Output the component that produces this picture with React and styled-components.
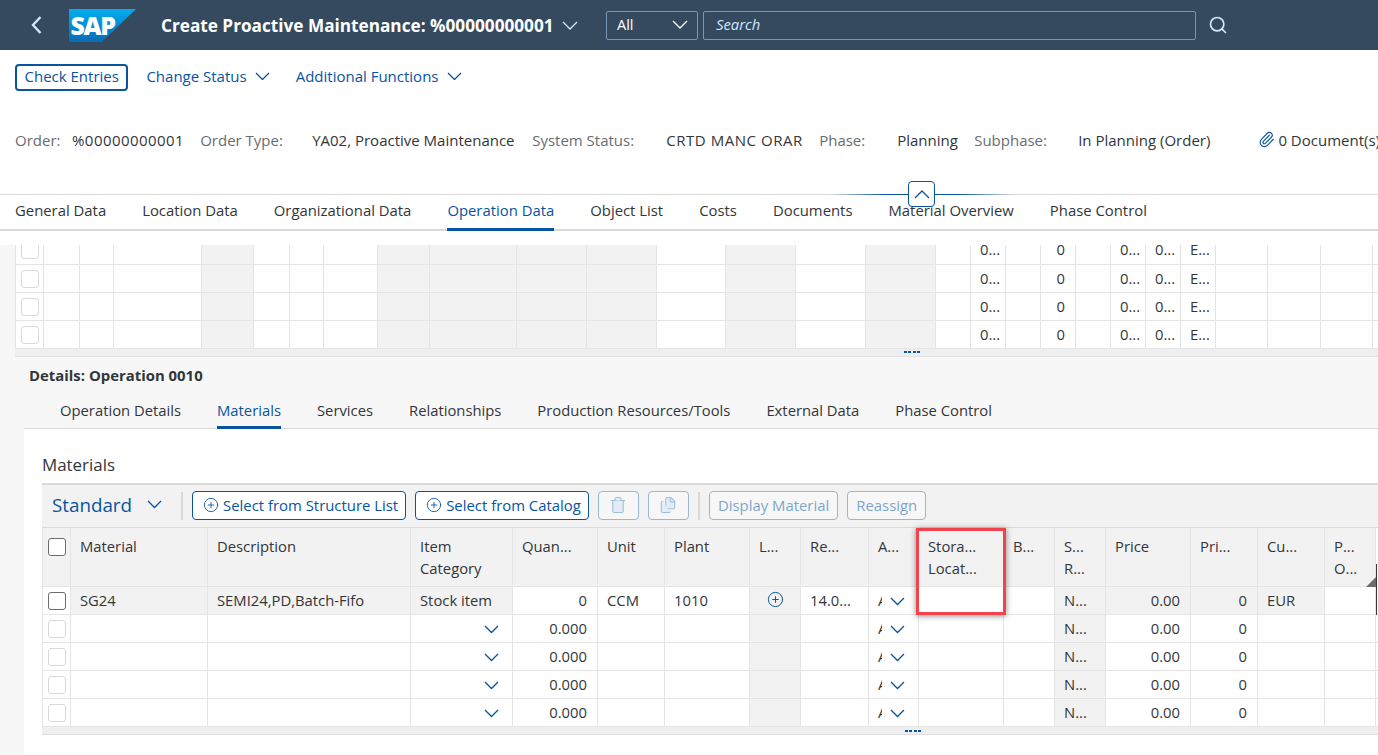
import React from "react";
import styled, { createGlobalStyle } from "styled-components";
import { Search, Paperclip, CirclePlus, Trash2, Files } from "lucide-react";

const Global = createGlobalStyle`
  html, body { margin: 0; padding: 0; width: 1378px; height: 755px; overflow: hidden; background: #fff; }
  body { font-family: "Open Sans", "Noto Sans", sans-serif; font-size: 15px; color: #32363a; }
  * { box-sizing: border-box; }
`;

const Page = styled.div`
  width: 1378px;
  height: 755px;
  overflow: hidden;
  display: flex;
  flex-direction: column;
`;

const ShellBar = styled.header`
  height: 50px;
  flex: none;
  background: #354a5f;
  display: flex;
  align-items: center;
  color: #fff;
`;
const BackBtn = styled.div`
  width: 69px;
  padding-left: 31px;
  display: flex;
  align-items: center;
  color: #d1e8ff;
`;
const LogoSlot = styled.div`
  width: 67px;
  flex: none;
  display: flex;
`;
const Title = styled.div`
  margin-left: 25px;
  font-size: 17.2px;
  font-weight: 700;
  white-space: nowrap;
  width: 393px;
`;
const TitleChevron = styled.div`
  display: flex;
  margin-left: 8px;
  width: 44px;
  color: #d1e8ff;
`;
const ScopeSelect = styled.div`
  width: 92px;
  height: 29px;
  border: 1px solid #7996b4;
  border-radius: 2px;
  display: flex;
  align-items: center;
  justify-content: space-between;
  padding: 0 9px 2px 10px;
  color: #fff;
  font-size: 14.5px;
`;
const SearchBox = styled.div`
  width: 493px;
  height: 29px;
  margin-left: 5px;
  border: 1px solid #7996b4;
  border-radius: 2px;
  padding: 0 0 2px 12px;
  display: flex;
  align-items: center;
  font-style: italic;
  font-size: 14.8px;
  color: #d1e8ff;
`;
const SearchIcon = styled.div`
  display: flex;
  margin-left: 12px;
  color: #d1e8ff;
`;

const ActionBar = styled.div`
  height: 54px;
  flex: none;
  padding: 14px 15px 0;
  display: flex;
  align-items: flex-start;
  gap: 18px;
`;
const OutlineAction = styled.div`
  height: 27px;
  padding: 0 7.5px 3px;
  border: 2px solid #0854a0;
  border-radius: 4px;
  color: #0854a0;
  display: flex;
  align-items: center;
  white-space: nowrap;
`;
const MenuAction = styled.div`
  height: 27px;
  display: flex;
  align-items: center;
  gap: 8px;
  padding: 0 8px 3px 0;
  color: #0854a0;
  white-space: nowrap;
`;

const InfoRow = styled.div`
  height: 90px;
  flex: none;
  padding: 0 0 19px 15px;
  display: flex;
  align-items: center;
  gap: 16px;
  white-space: nowrap;
  overflow: hidden;
`;
const InfoPair = styled.div`
  display: flex;
  flex: none;
`;
const InfoLabel = styled.span`
  color: #6a6d70;
  width: ${(p) => p.$w}px;
  flex: none;
`;
const InfoValue = styled.span`
  min-width: ${(p) => p.$w}px;
  letter-spacing: ${(p) => p.$ls || 0}px;
`;
const Docs = styled.div`
  margin-left: 32px;
  display: flex;
  align-items: center;
  gap: 3px;
  flex: none;
  svg { color: #0854a0; }
`;

const TabStrip = styled.nav`
  position: relative;
  height: 37px;
  flex: none;
  border-top: 1px solid #d9d9d9;
  border-bottom: 2px solid #d9d9d9;
  padding-left: 15px;
  display: flex;
  gap: 36px;
  font-size: 14.86px;
`;
const Tab = styled.div`
  height: 36px;
  margin-bottom: -2px;
  line-height: 30px;
  white-space: nowrap;
  color: ${(p) => (p.$active ? "#0854a0" : "#32363a")};
  border-bottom: 3px solid ${(p) => (p.$active ? "#0854a0" : "transparent")};
`;
const CollapseLine = styled.div`
  position: absolute;
  left: 830px;
  width: 184px;
  top: -1px;
  height: 1px;
  background: linear-gradient(90deg, transparent, #0854a0 30%, #0854a0 70%, transparent);
`;
const CollapseBtn = styled.div`
  position: absolute;
  left: 908px;
  top: -14px;
  width: 27px;
  height: 26px;
  background: #fff;
  border: 1px solid #0854a0;
  border-radius: 4px;
  color: #0854a0;
  display: flex;
  align-items: center;
  justify-content: center;
`;

const Content = styled.main`
  flex: 1;
  min-height: 0;
  display: flex;
  flex-direction: column;
`;
const TopSpacer = styled.div`
  height: 14px;
  flex: none;
  background: #fff;
`;
const Lower = styled.div`
  flex: 1;
  min-height: 0;
  background: #f7f7f7;
  padding-left: 15px;
  display: flex;
  flex-direction: column;
`;
const Grid = styled.div`
  display: grid;
  grid-template-columns: ${(p) => p.$cols};
  overflow: hidden;
  font-size: 14.8px;
`;
const Cell = styled.div`
  height: ${(p) => p.$h || 28}px;
  background: ${(p) => (p.$shade ? "#f2f2f2" : "#fff")};
  border-right: 1px solid #e5e5e5;
  border-bottom: 1px solid #e5e5e5;
  padding: 0 ${(p) => (p.$num ? 10 : 9)}px 2px;
  display: flex;
  align-items: center;
  justify-content: ${(p) => (p.$num ? "flex-end" : p.$center ? "center" : "flex-start")};
  white-space: nowrap;
  overflow: hidden;
  position: relative;
`;
const ClippedCell = styled(Cell)`
  height: 20px;
  align-items: flex-end;
  line-height: 30px;
  padding-bottom: 0;
`;
const Check = styled.div`
  width: 18px;
  height: 18px;
  border-radius: 3px;
  background: #fff;
  border: 1px solid ${(p) => (p.$strong ? "#6a6d70" : "#d9d9d9")};
  flex: none;
`;
const CheckCell = styled(Cell)`
  border-left: 1px solid #e5e5e5;
  padding: 0 0 0 5px;
`;
const ClippedCheckCell = styled(CheckCell)`
  height: 20px;
  align-items: flex-end;
  padding-bottom: 5px;
`;
const ScrollBar = styled.div`
  position: relative;
  height: 8px;
  flex: none;
  background: #edeff0;
  border-bottom: 1px solid #e0e0e0;
`;
const SashDots = styled.div`
  position: absolute;
  left: ${(p) => p.$left}px;
  top: ${(p) => p.$top}px;
  width: 16px;
  height: 2px;
  background: repeating-linear-gradient(90deg, #0854a0 0 3px, transparent 3px 4.4px);
`;

const DetailHead = styled.div`
  height: 39px;
  flex: none;
  padding: 8px 0 0 14px;
  font-weight: 700;
  font-size: 14.9px;
  color: #32363a;
`;
const DetailTabs = styled.nav`
  margin-left: 9px;
  height: 33px;
  flex: none;
  padding: 0 0 0 36px;
  display: flex;
  gap: 36px;
  border-bottom: 1px solid #d9d9d9;
  font-size: 14.8px;
`;
const DetailTab = styled.div`
  height: 33px;
  padding-top: 4px;
  white-space: nowrap;
  color: ${(p) => (p.$active ? "#0854a0" : "#32363a")};
  border-bottom: 3px solid ${(p) => (p.$active ? "#0854a0" : "transparent")};
  margin-bottom: -1px;
`;
const Panel = styled.section`
  margin-left: 9px;
  flex: 1;
  min-height: 0;
  background: #fff;
  padding-left: 18px;
  display: flex;
  flex-direction: column;
`;
const PanelTitle = styled.div`
  height: 54px;
  flex: none;
  padding-top: 24px;
  font-size: 16.9px;
  color: #32363a;
`;
const TableBar = styled.div`
  height: 45px;
  flex: none;
  background: #f2f2f2;
  border-top: 2px solid #d9d9d9;
  border-bottom: 1px solid #d9d9d9;
  display: flex;
  align-items: center;
  padding: 0 0 1px 10px;
  gap: 9px;
`;
const VariantName = styled.div`
  font-size: 18.8px;
  color: #0854a0;
  display: flex;
  align-items: center;
  gap: 15px;
  width: 120px;
  padding-bottom: 2px;
  white-space: nowrap;
`;
const Sep = styled.div`
  width: 2px;
  height: 28px;
  background: #d9d9d9;
`;
const BarBtn = styled.div`
  height: 29px;
  padding: 0 ${(p) => (p.$off ? 8 : 7)}px 2px ${(p) => (p.$off ? 8 : 10)}px;
  width: ${(p) => (p.$w ? p.$w + "px" : "auto")};
  border: 1px solid ${(p) => (p.$off ? "#93b8d9" : "#0854a0")};
  border-radius: 4px;
  color: ${(p) => (p.$off ? "#7ea6cc" : "#0854a0")};
  background: ${(p) => (p.$off ? "#f7f7f7" : "#fff")};
  display: flex;
  align-items: center;
  justify-content: center;
  gap: 4px;
  white-space: nowrap;
  flex: none;
  font-size: 14.9px;
`;
const HeadText = styled.div`
  align-self: flex-start;
  padding-top: 7px;
  line-height: 22px;
`;
const HeadCheck = styled.div`
  align-self: flex-start;
  padding-top: 10px;
`;
const TableWrap = styled.div`
  position: relative;
`;
const Highlight = styled.div`
  position: absolute;
  left: 874px;
  top: 0;
  width: 90px;
  height: 87px;
  border: 3px solid #f2434a;
  box-shadow: 0 1px 6px rgba(0, 0, 0, 0.45);
`;
const ResizeMark = styled.div`
  position: absolute;
  right: 1px;
  top: 36px;
  width: 1px;
  height: 51px;
  background: #32363a;
`;
const ResizeCorner = styled.div`
  position: absolute;
  right: 2px;
  top: 49px;
  width: 0;
  height: 0;
  border-left: 10px solid transparent;
  border-bottom: 10px solid #6a6d70;
`;
const Clip = styled.span`
  width: 4px;
  overflow: hidden;
  flex: none;
  margin: 0 8px 4px 0;
`;
const ComboCell = styled(Cell)`
  color: #0854a0;
  padding-top: 2px;
  padding-bottom: 0;
  span { color: #32363a; }
`;
const DropCell = styled(Cell)`
  justify-content: flex-end;
  padding: 2px 13px 0 0;
  color: #0854a0;
`;

const upperCols = "29px 36px 34px 88px 52px 36px 34px 54px 52px 87px 70px 70px 69px 70px 70px 70px 35px 35px 35px 35px 35px 35px 35px 35px 52px 53px 52px 5px";
const upperShade = new Set([4, 8, 9, 10, 11, 13, 15]);
const upperText = { 17: "0...", 19: "0", 21: "0...", 22: "0...", 23: "E..." };

function UpperRow({ first }) {
  const cols = upperCols.split(" ");
  const C = first ? ClippedCell : Cell;
  const CC = first ? ClippedCheckCell : CheckCell;
  return cols.map((_, i) =>
    i === 0 ? (
      <CC key={i}>
        <Check />
      </CC>
    ) : (
      <C key={i} $shade={upperShade.has(i)} $num={i === 19}>
        {upperText[i]}
      </C>
    )
  );
}

const lowerCols = "29px 137px 203px 102px 85px 67px 85px 51px 68px 50px 85px 51px 51px 85px 67px 67px 51px 2px";

function Head({ children }) {
  return (
    <Cell $h={59} $shade>
      <HeadText>{children}</HeadText>
    </Cell>
  );
}

const Caret = ({ w = 15, sw = 1.3 }) => {
  const h = w / 2 + 1;
  return (
    <svg width={w} height={h} viewBox={`0 0 ${w} ${h}`} style={{ flex: "none", display: "block" }}>
      <path d={`M1 1 L${w / 2} ${h - 1} L${w - 1} 1`} fill="none" stroke="currentColor" strokeWidth={sw} />
    </svg>
  );
};
const CaretUp = () => (
  <svg width="16" height="9" viewBox="0 0 16 9" style={{ display: "block" }}>
    <path d="M1 8 L8 1 L15 8" fill="none" stroke="currentColor" strokeWidth="1.3" />
  </svg>
);
const BackCaret = () => (
  <svg width="11" height="18" viewBox="0 0 11 18" style={{ display: "block" }}>
    <path d="M9.5 1 L2 9 L9.5 17" fill="none" stroke="currentColor" strokeWidth="2.4" />
  </svg>
);

function EmptyRow() {
  return (
    <>
      <CheckCell>
        <Check />
      </CheckCell>
      <Cell />
      <Cell />
      <DropCell>
        <Caret />
      </DropCell>
      <Cell $num>0.000</Cell>
      <Cell />
      <Cell />
      <Cell $shade />
      <Cell />
      <ComboCell>
        <Clip>A</Clip>
        <Caret />
      </ComboCell>
      <Cell />
      <Cell />
      <Cell $shade>N...</Cell>
      <Cell $num>0.00</Cell>
      <Cell $num>0</Cell>
      <Cell />
      <Cell />
      <Cell />
    </>
  );
}

const SapLogo = () => (
  <svg width="67" height="33" viewBox="0 0 67 33" style={{ display: "block" }}>
    <defs>
      <linearGradient id="sapg" x1="0" y1="0" x2="0" y2="1">
        <stop offset="0" stopColor="#00aeef" />
        <stop offset="1" stopColor="#0a6ab6" />
      </linearGradient>
    </defs>
    <polygon points="0,0 67,0 33,33 0,33" fill="url(#sapg)" />
    <text x="1.5" y="25.5" fontFamily="'Open Sans', sans-serif" fontWeight="800" fontSize="25" letterSpacing="-1.4" fill="#fff">SAP</text>
  </svg>
);

export default function App() {
  const info = [
    ["Order:", "%00000000001", 57, 111, 0.45],
    ["Order Type:", "YA02, Proactive Maintenance", 112, 204, 0],
    ["System Status:", "CRTD MANC ORAR", 134, 137, 0.55],
    ["Phase:", "Planning", 78, 61, 0],
    ["Subphase:", "In Planning (Order)", 104, 131, 0],
  ];
  const tabs = ["General Data", "Location Data", "Organizational Data", "Operation Data", "Object List", "Costs", "Documents", "Material Overview", "Phase Control"];
  const dtabs = ["Operation Details", "Materials", "Services", "Relationships", "Production Resources/Tools", "External Data", "Phase Control"];
  return (
    <Page>
      <Global />
      <ShellBar>
        <BackBtn>
          <BackCaret />
        </BackBtn>
        <LogoSlot>
          <SapLogo />
        </LogoSlot>
        <Title>Create Proactive Maintenance: %00000000001</Title>
        <TitleChevron>
          <Caret w={16} />
        </TitleChevron>
        <ScopeSelect>
          All
          <Caret w={16} />
        </ScopeSelect>
        <SearchBox>Search</SearchBox>
        <SearchIcon>
          <Search size={20} strokeWidth={2} />
        </SearchIcon>
      </ShellBar>

      <ActionBar>
        <OutlineAction>Check Entries</OutlineAction>
        <MenuAction>
          Change Status <Caret />
        </MenuAction>
        <MenuAction>
          Additional Functions <Caret />
        </MenuAction>
      </ActionBar>

      <InfoRow>
        {info.map(([l, v, w, vw, ls]) => (
          <InfoPair key={l}>
            <InfoLabel $w={w}>{l}</InfoLabel>
            <InfoValue $w={vw} $ls={ls}>
              {v}
            </InfoValue>
          </InfoPair>
        ))}
        <Docs>
          <Paperclip size={17} strokeWidth={1.6} />0 Document(s)
        </Docs>
      </InfoRow>

      <TabStrip>
        {tabs.map((t) => (
          <Tab key={t} $active={t === "Operation Data"}>
            {t}
          </Tab>
        ))}
        <CollapseLine />
        <CollapseBtn>
          <CaretUp />
        </CollapseBtn>
      </TabStrip>

      <Content>
        <TopSpacer />
        <Lower>
          <Grid $cols={upperCols}>
            <UpperRow first />
            <UpperRow />
            <UpperRow />
            <UpperRow />
          </Grid>
          <ScrollBar>
            <SashDots $left={889} $top={2} />
          </ScrollBar>
          <DetailHead>Details: Operation 0010</DetailHead>
          <DetailTabs>
            {dtabs.map((t) => (
              <DetailTab key={t} $active={t === "Materials"}>
                {t}
              </DetailTab>
            ))}
          </DetailTabs>
          <Panel>
            <PanelTitle>Materials</PanelTitle>
            <TableBar>
              <VariantName>
                Standard <Caret />
              </VariantName>
              <Sep />
              <BarBtn>
                <CirclePlus size={16} strokeWidth={1.3} /> Select from Structure List
              </BarBtn>
              <BarBtn>
                <CirclePlus size={16} strokeWidth={1.3} /> Select from Catalog
              </BarBtn>
              <BarBtn $off $w={41}>
                <Trash2 size={18} strokeWidth={1.4} color="#9dbedd" fill="#e3ecf5" />
              </BarBtn>
              <BarBtn $off $w={41}>
                <Files size={18} strokeWidth={1.4} color="#9dbedd" fill="#e3ecf5" />
              </BarBtn>
              <Sep />
              <BarBtn $off>Display Material</BarBtn>
              <BarBtn $off>Reassign</BarBtn>
            </TableBar>
            <TableWrap>
              <Grid $cols={lowerCols}>
                <CheckCell $h={59} $shade>
                  <HeadCheck>
                    <Check $strong />
                  </HeadCheck>
                </CheckCell>
                <Head>Material</Head>
                <Head>Description</Head>
                <Head>
                  Item
                  <br />
                  Category
                </Head>
                <Head>Quan...</Head>
                <Head>Unit</Head>
                <Head>Plant</Head>
                <Head>L...</Head>
                <Head>Re...</Head>
                <Head>A...</Head>
                <Head>
                  Stora...
                  <br />
                  Locat...
                </Head>
                <Head>B...</Head>
                <Head>
                  S...
                  <br />
                  R...
                </Head>
                <Head>Price</Head>
                <Head>Pri...</Head>
                <Head>Cu...</Head>
                <Head>
                  P...
                  <br />
                  O...
                </Head>
                <Cell $h={59} />

                <CheckCell>
                  <Check $strong />
                </CheckCell>
                <Cell $shade>SG24</Cell>
                <Cell $shade>SEMI24,PD,Batch-Fifo</Cell>
                <Cell $shade>Stock item</Cell>
                <Cell $num>0</Cell>
                <Cell>CCM</Cell>
                <Cell>1010</Cell>
                <Cell $shade $center>
                  <CirclePlus size={17} strokeWidth={1.4} color="#0854a0" />
                </Cell>
                <Cell>14.0...</Cell>
                <ComboCell>
                  <Clip>A</Clip>
                  <Caret />
                </ComboCell>
                <Cell />
                <Cell />
                <Cell $shade>N...</Cell>
                <Cell $num $shade>
                  0.00
                </Cell>
                <Cell $num $shade>
                  0
                </Cell>
                <Cell $shade>EUR</Cell>
                <Cell />
                <Cell />

                <EmptyRow />
                <EmptyRow />
                <EmptyRow />
                <EmptyRow />
              </Grid>
              <ScrollBar>
                <SashDots $left={863} $top={3} />
              </ScrollBar>
              <Highlight />
              <ResizeMark />
              <ResizeCorner />
            </TableWrap>
          </Panel>
        </Lower>
      </Content>
    </Page>
  );
}
